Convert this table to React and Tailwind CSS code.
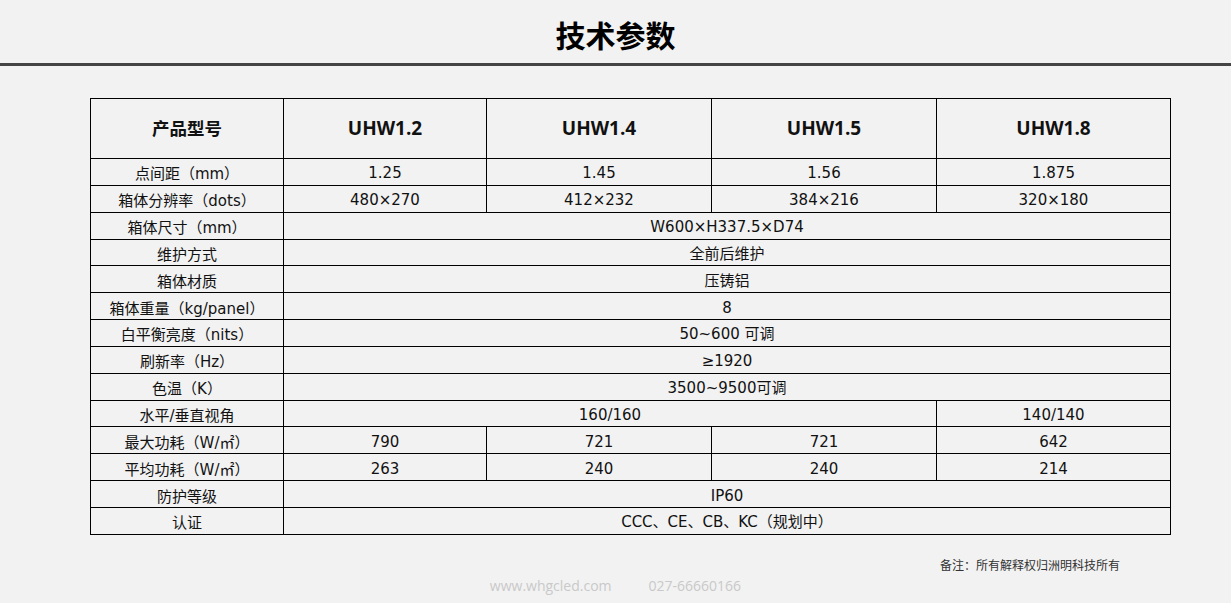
import React from "react";

const FONT = { fontFamily: '"Open Sans", "Noto Sans CJK SC", sans-serif' };
const CELL_FONT = { fontFamily: '"DejaVu Sans", "Noto Sans CJK SC", sans-serif' };

// each row: label, then cells as [text, colSpan]
const rows = [
  ["点间距（mm）", [["1.25", 1], ["1.45", 1], ["1.56", 1], ["1.875", 1]]],
  ["箱体分辨率（dots）", [["480×270", 1], ["412×232", 1], ["384×216", 1], ["320×180", 1]]],
  ["箱体尺寸（mm）", [["W600×H337.5×D74", 4]]],
  ["维护方式", [["全前后维护", 4]]],
  ["箱体材质", [["压铸铝", 4]]],
  ["箱体重量（kg/panel）", [["8", 4]]],
  ["白平衡亮度（nits）", [["50~600 可调", 4]]],
  ["刷新率（Hz）", [["≥1920", 4]]],
  ["色温（K）", [["3500~9500可调", 4]]],
  ["水平/垂直视角", [["160/160", 3], ["140/140", 1]]],
  ["最大功耗（W/㎡）", [["790", 1], ["721", 1], ["721", 1], ["642", 1]]],
  ["平均功耗（W/㎡）", [["263", 1], ["240", 1], ["240", 1], ["214", 1]]],
  ["防护等级", [["IP60", 4]]],
  ["认证", [["CCC、CE、CB、KC（规划中）", 4]]],
];

const models = ["UHW1.2", "UHW1.4", "UHW1.5", "UHW1.8"];

export default function App() {
  return (
    <div className="min-h-screen w-full bg-[#f2f2f2] text-[#111]" style={FONT}>
      <div className="h-[66px] flex items-center justify-center border-b-[3px] border-[#444]">
        <h1 className="text-[30px] font-bold text-black pt-[7px]">技术参数</h1>
      </div>

      <table className="ml-[90px] mt-[32px] w-[1080px] border-collapse table-fixed">
        <colgroup>
          <col className="w-[193px]" />
          <col className="w-[203px]" />
          <col className="w-[225px]" />
          <col className="w-[225px]" />
          <col className="w-[234px]" />
        </colgroup>
        <thead>
          <tr>
            <th className="h-[60px] border border-black text-[17.5px] font-bold text-center align-middle p-0">
              产品型号
            </th>
            {models.map((m) => (
              <th key={m} className="h-[60px] border border-black text-[19px] font-bold text-center align-middle p-0">
                {m}
              </th>
            ))}
          </tr>
        </thead>
        <tbody style={CELL_FONT}>
          {rows.map(([label, cells]) => (
            <tr key={label}>
              <td className="h-[26.85px] border border-black text-[15px] text-center align-middle p-0 pt-[6px] leading-[19px]">
                {label}
              </td>
              {cells.map(([text, span], i) => (
                <td
                  key={i}
                  colSpan={span}
                  className="h-[26.85px] border border-black text-[15px] text-center align-middle p-0 pt-[4px] leading-[19px]"
                >
                  {text}
                </td>
              ))}
            </tr>
          ))}
        </tbody>
      </table>

      <div className="w-[1120px] flex justify-end mt-[22px]">
        <span className="text-[12px] text-[#333]">备注：所有解释权归洲明科技所有</span>
      </div>
      <div className="flex justify-center gap-[37px] mt-[0px] text-[14px] text-[#c9c9c9]">
        <span>www.whgcled.com</span>
        <span>027-66660166</span>
      </div>
    </div>
  );
}
